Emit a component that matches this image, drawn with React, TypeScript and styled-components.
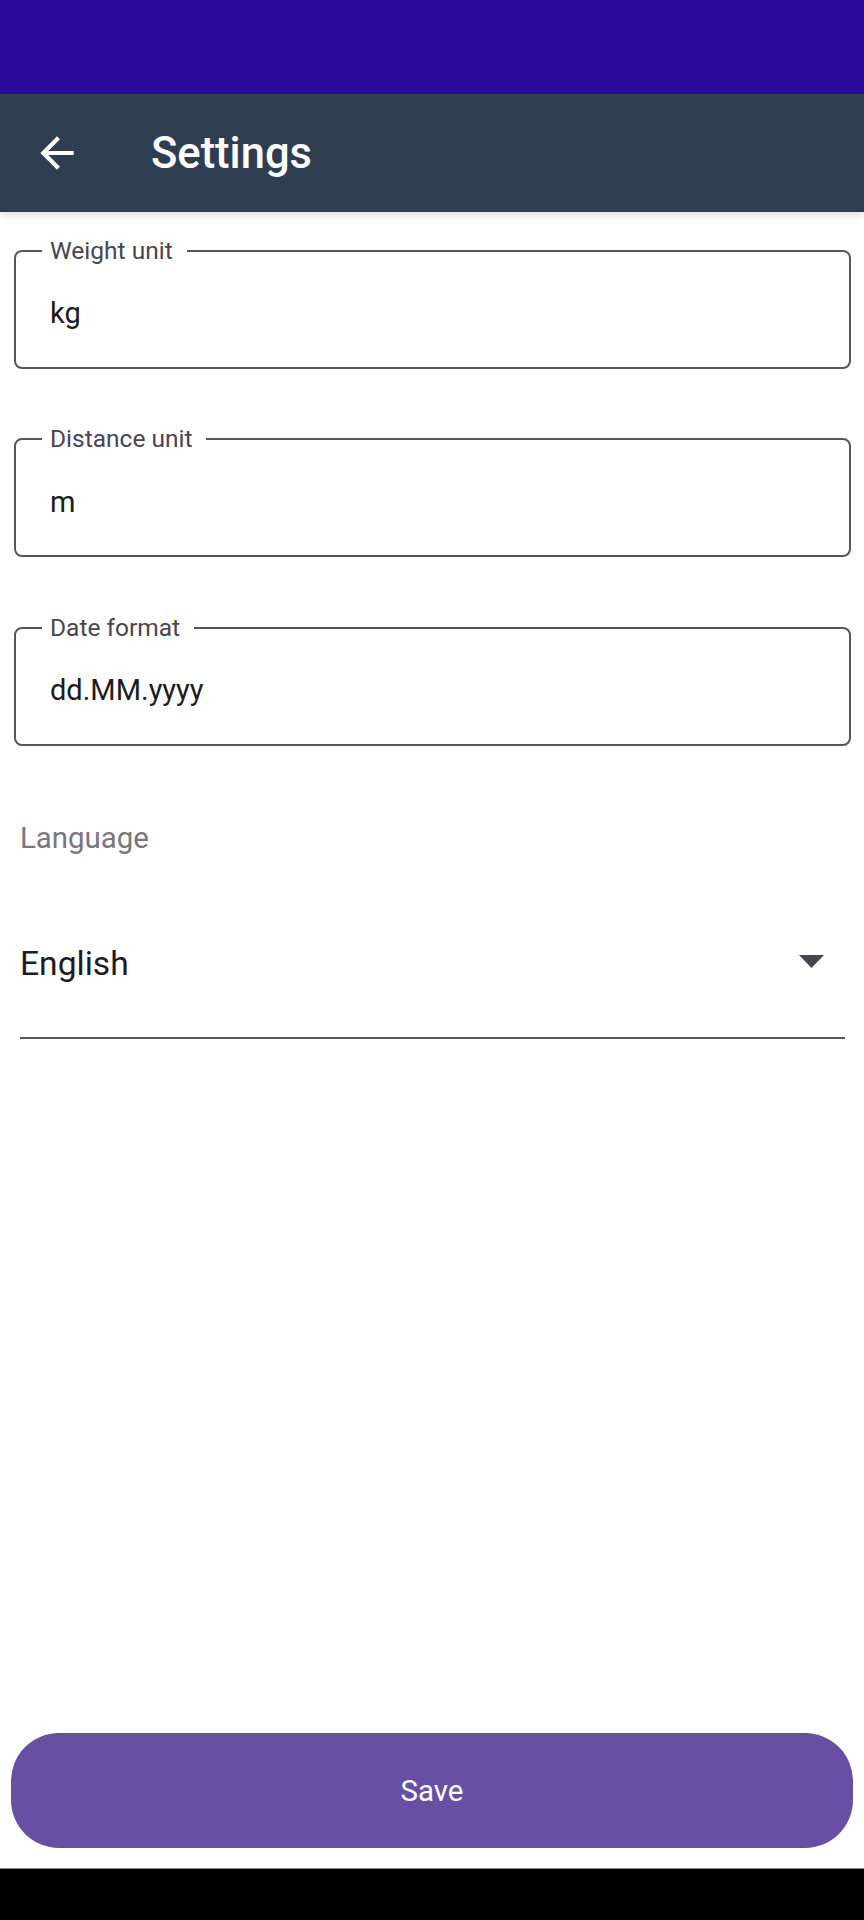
import styled, { createGlobalStyle } from 'styled-components';

const GlobalStyle = createGlobalStyle`
    html, body {
        margin: 0;
        padding: 0;
        background: #ffffff;
    }
    body {
        font-family: Roboto, "Noto Sans", Arial, sans-serif;
    }
    * {
        box-sizing: border-box;
    }
`;

interface FieldProps {
    label: string;
    value: string;
}

const fields: FieldProps[] = [
    { label: 'Weight unit', value: 'kg' },
    { label: 'Distance unit', value: 'm' },
    { label: 'Date format', value: 'dd.MM.yyyy' },
];

function OutlinedField({ label, value }: FieldProps) {
    return (
        <Field>
            <Legend>{label}</Legend>
            <Value>{value}</Value>
        </Field>
    );
}

export default function App() {
    return (
        <Page>
            <GlobalStyle />
            <StatusBar />
            <AppBar>
                <BackButton aria-label="back">
                    <svg width="50" height="50" viewBox="0 0 24 24" fill="#ffffff">
                        <path d="M20 11H7.83l5.59-5.59L12 4l-8 8 8 8 1.41-1.41L7.83 13H20v-2z" />
                    </svg>
                </BackButton>
                <Title>Settings</Title>
            </AppBar>
            <Main>
                <Fields>
                    {fields.map((f) => (
                        <OutlinedField key={f.label} label={f.label} value={f.value} />
                    ))}
                </Fields>
                <LanguageLabel>Language</LanguageLabel>
                <Spinner>
                    <SpinnerText>English</SpinnerText>
                    <svg width="25" height="13" viewBox="0 0 25 13">
                        <polygon points="0,0 25,0 12.5,13" fill="#49454f" />
                    </svg>
                </Spinner>
                <SaveButton>Save</SaveButton>
            </Main>
            <NavBar />
        </Page>
    );
}

const Page = styled.div`
    display: flex;
    flex-direction: column;
    height: 1920px;
    overflow: hidden;
`;

const StatusBar = styled.div`
    height: 94px;
    flex-shrink: 0;
    background-color: #2b0b99;
`;

const AppBar = styled.header`
    height: 118px;
    flex-shrink: 0;
    display: flex;
    align-items: center;
    padding-left: 32px;
    background-color: #2e3e50;
    box-shadow: 0px 3px 8px 0px #00000024;
    position: relative;
    z-index: 1;
`;

const BackButton = styled.div`
    width: 50px;
    height: 50px;
    display: flex;
    align-items: center;
    justify-content: center;
`;

const Title = styled.h1`
    margin: 0 0 0 69px;
    font-size: 43.5px;
    font-weight: 500;
    color: #ffffff;
    line-height: 50px;
    padding-top: 2px;
`;

const Main = styled.main`
    flex: 1;
    display: flex;
    flex-direction: column;
    padding-top: 23.5px;
`;

const Fields = styled.div`
    display: flex;
    flex-direction: column;
    gap: 55.5px;
    padding: 0 13px 0 14px;
`;

const Field = styled.fieldset`
    margin: 0;
    padding: 0 0 0 26px;
    min-width: 0;
    border: 2px solid #57555d;
    border-radius: 8px;
`;

const Legend = styled.legend`
    padding: 0 14px 0 8px;
    font-size: 24.5px;
    line-height: 30px;
    color: #49454f;
`;

const Value = styled.div`
    height: 101px;
    padding: 27.5px 0 0 8px;
    font-size: 29px;
    line-height: 40px;
    color: #1c1b1f;
`;

const LanguageLabel = styled.div`
    margin-top: 75px;
    padding-left: 20px;
    font-size: 29.4px;
    line-height: 34px;
    color: #79767d;
`;

const Spinner = styled.div`
    display: flex;
    align-items: center;
    justify-content: space-between;
    margin: 0 19px 0 20px;
    padding: 89.5px 21px 52.5px 0;
    border-bottom: 2px solid #5a5860;

    svg {
        margin-bottom: 6px;
    }
`;

const SpinnerText = styled.span`
    font-size: 33.6px;
    line-height: 40px;
    color: #1c1b1f;
`;

const SaveButton = styled.button`
    margin: auto 11px 20px 11px;
    height: 115px;
    border: none;
    border-radius: 48px;
    background-color: #6750a4;
    color: #ffffff;
    font-family: Roboto, "Noto Sans", Arial, sans-serif;
    font-size: 29.4px;
    font-weight: 400;
    cursor: pointer;
`;

const NavBar = styled.div`
    height: 52px;
    flex-shrink: 0;
    background-color: #000000;
    border-top: 1px solid #8a8a8a;
`;
